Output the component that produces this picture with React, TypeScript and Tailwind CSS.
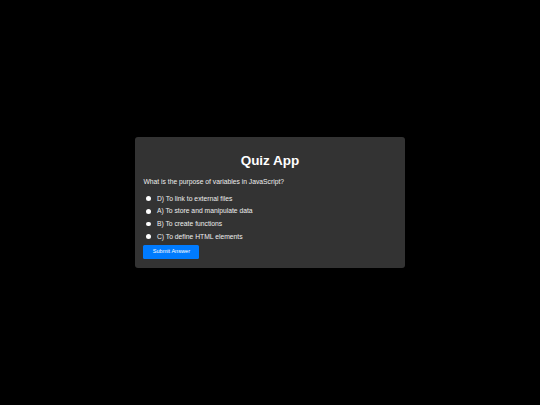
import React, { useState } from "react";

const options = [
  "D) To link to external files",
  "A) To store and manipulate data",
  "B) To create functions",
  "C) To define HTML elements",
];

export default function App() {
  const [sel, setSel] = useState<number | null>(null);
  return (
    <div
      className="h-[405px] w-full bg-black flex items-center justify-center"
      style={{ fontFamily: '"Liberation Sans", Arial, sans-serif' }}
    >
      <div className="w-[270px] bg-[#333333] rounded-[3px] px-[8.4px] pt-[16.2px] pb-[9px] text-white">
        <h1 className="text-center font-bold text-[13.5px] leading-[16px]">Quiz App</h1>
        <p className="mt-[8.9px] text-[6.75px] leading-[8px] text-[#eeeeee]">
          What is the purpose of variables in JavaScript?
        </p>
        <div className="mt-[6.15px] flex flex-col">
          {options.map((o, i) => (
            <label
              key={o}
              className="h-[12.7px] flex items-center text-[6.75px] leading-[8px] text-[#eeeeee] cursor-pointer"
              onClick={() => setSel(i)}
            >
              <span
                className={
                  sel === i
                    ? "ml-[3px] w-[4.6px] h-[4.6px] rounded-full bg-[#007bff] shrink-0"
                    : "ml-[3px] w-[4.6px] h-[4.6px] rounded-full bg-white shrink-0"
                }
              />
              <span className="ml-[6px]">{o}</span>
            </label>
          ))}
        </div>
        <button className="mt-[1.95px] w-[56px] h-[14px] bg-[#007bff] rounded-[1.5px] text-white text-[5.6px] leading-[7px] flex items-center justify-center">
          Submit Answer
        </button>
      </div>
    </div>
  );
}
